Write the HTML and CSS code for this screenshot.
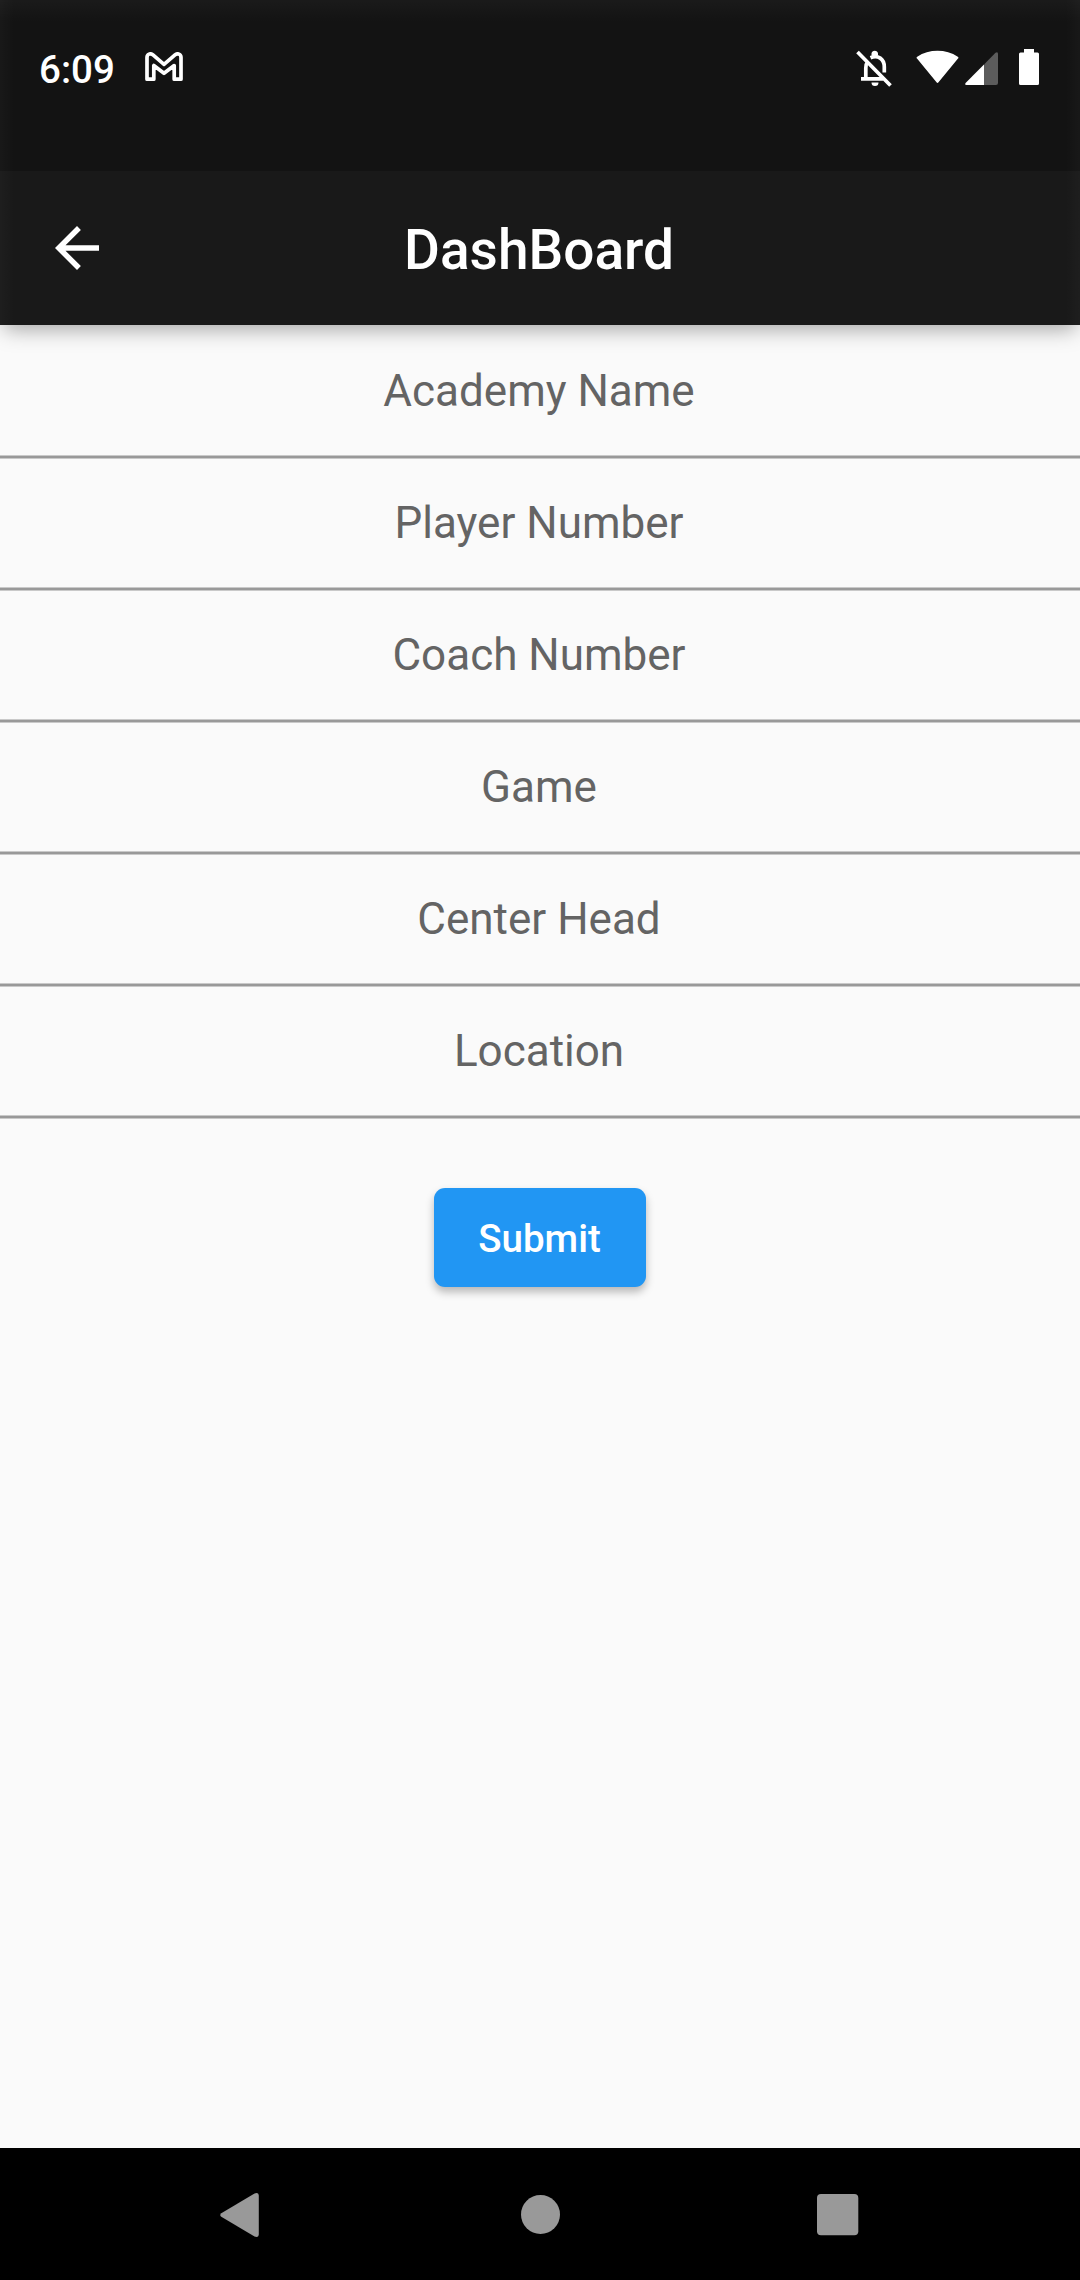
FILE: index.html
```html
<!DOCTYPE html>
<html lang="en">
<head>
<meta charset="utf-8">
<title>DashBoard</title>
<link rel="stylesheet" href="styles.css">
</head>
<body>
<div class="screen">
  <header class="top">
    <div class="status">
      <span class="clock">6:09</span>
      <svg class="gmail" width="38" height="30" viewBox="0 0 38 30"><path d="M2 5.500C2 2 5.500 .8 8 2.900L19 12.300 30 2.900C32.500 .8 36 2 36 5.500V27.200H29.200V13.500L19 21.300 8.800 13.500V27.200H2Z" fill="none" stroke="#fff" stroke-width="3.700" stroke-linejoin="round"/></svg>
      <div class="signals">
        <svg class="bell" width="36" height="37" viewBox="0 0 36 37"><path d="M1.500 2L34.500 35.500M5 28.800H27M9.800 28V18C9.800 15.500 10.500 13 12 11M14.500 7.700C22 4.500 28.300 9 28.300 17V22.500" fill="none" stroke="#fff" stroke-width="3.700"/><path d="M15.500 5.500V3.500A3.300 3.300 0 0 1 22 3.500V5.500ZM15.500 32.500H22.500A3.500 3.500 0 0 1 15.500 32.500Z" fill="#fff"/></svg>
        <svg class="wifi" width="43" height="34" viewBox="0 0 43 34"><path d="M1 8.500Q0 7.500 1.200 6.700C13 -1.200 30 -1.200 41.800 6.700Q43 7.500 42 8.500L22.500 32.300Q21.500 33.500 20.500 32.300Z" fill="#fff"/></svg>
        <svg class="cell" width="33" height="33" viewBox="0 0 33 33"><path d="M19 12.500L30.500 .8Q33 -.8 33 2V31Q33 33 31 33H19Z" fill="#5c5c5c"/><path d="M19 12.500V33H1.500Q-.8 33 .8 30.700Z" fill="#fff"/></svg>
        <svg class="battery" width="20" height="36" viewBox="0 0 20 36"><path d="M5 0H15V3.500H18.500Q20 3.500 20 5V34.500Q20 36 18.500 36H1.500Q0 36 0 34.500V5Q0 3.500 1.500 3.500H5Z" fill="#fff"/></svg>
      </div>
    </div>
    <div class="appbar">
      <svg class="back" width="66" height="66" viewBox="0 0 24 24"><path d="M20 11H7.830l5.590-5.590L12 4l-8 8 8 8 1.410-1.410L7.830 13H20v-2z" fill="#fff"/></svg>
      <h1 class="title">DashBoard</h1>
    </div>
  </header>
  <main class="form">
    <div class="field">Academy Name</div>
    <div class="field">Player Number</div>
    <div class="field">Coach Number</div>
    <div class="field">Game</div>
    <div class="field">Center Head</div>
    <div class="field">Location</div>
    <button class="submit">Submit</button>
  </main>
  <nav class="nav">
    <svg width="40" height="46" viewBox="0 0 40 46"><path d="M1.300 21.200Q-.8 23 1.300 24.800L34.500 44.500Q38.800 46 38.800 42V4Q38.800 0 34.500 1.500Z" fill="#999"/></svg>
    <svg class="home" width="39" height="39" viewBox="0 0 39 39"><circle cx="19.500" cy="19.500" r="19.500" fill="#999"/></svg>
    <svg width="42" height="42" viewBox="0 0 42 42"><rect width="41.300" height="41.300" rx="4" fill="#999"/></svg>
  </nav>
</div>
</body>
</html>
```
FILE: styles.css
```css
* { box-sizing: border-box; }
body { margin: 0; font-family: Roboto, sans-serif; }
.screen {
  width: 1080px;
  height: 2280px;
  display: flex;
  flex-direction: column;
  background: #fafafa;
}
.top {
  height: 325px;
  background: #191919;
  box-shadow: 0 8px 20px -4px rgba(0, 0, 0, .35);
}
.status {
  height: 171px;
  padding: 0 41px 0 39px;
  display: flex;
  align-items: flex-start;
  background:
    linear-gradient(rgba(255, 255, 255, .03), transparent 22px),
    linear-gradient(90deg, rgba(255, 255, 255, .025), transparent 14px, transparent 1066px, rgba(255, 255, 255, .025)),
    #131313;
  color: #fff;
}
.clock {
  width: 106px;
  padding-top: 47px;
  font-size: 38.500px;
  font-weight: 500;
  line-height: 45px;
}
.gmail { margin-top: 52px; }
.signals { margin-left: auto; display: flex; }
.bell { margin: 50px 24px 0 0; }
.wifi { margin: 50px 6px 0 0; }
.cell { margin: 52px 21px 0 0; }
.battery { margin-top: 49px; }
.appbar {
  height: 154px;
  padding: 0 45px 0 44px;
  display: grid;
  grid-template-columns: 66px 1fr 66px;
  align-items: center;
  background: linear-gradient(90deg, rgba(255, 255, 255, .025), transparent 14px, transparent 1066px, rgba(255, 255, 255, .025));
}
.title {
  margin: 0;
  padding: 3px 1px 0 0;
  color: #fff;
  font-size: 55px;
  font-weight: 500;
  text-align: center;
}
.form {
  flex: 1;
  padding-top: 2px;
  display: flex;
  flex-direction: column;
  align-items: center;
}
.field {
  width: 100%;
  height: 132px;
  padding-right: 2px;
  line-height: 128px;
  font-size: 44px;
  text-align: center;
  color: #646464;
  background: linear-gradient(#c9c9c9 0 1px, #999 1px 3px, #c9c9c9 3px) bottom / 100% 4px no-repeat;
}
.submit {
  margin: 69px 0 0;
  width: 212px;
  height: 99px;
  padding: 0 1px 0 0;
  border: 0;
  border-radius: 11px;
  background: #2196f3;
  color: #fff;
  font: 500 38.500px/101px Roboto, sans-serif;
  box-shadow: 0 5px 8px rgba(0, 0, 0, .27);
}
.nav {
  height: 132px;
  padding: 1px 221px 0 220px;
  display: grid;
  grid-template-columns: 40px 1fr 42px;
  align-items: center;
  justify-items: center;
  background: #000;
}
.home { margin-left: 4px; }
```
